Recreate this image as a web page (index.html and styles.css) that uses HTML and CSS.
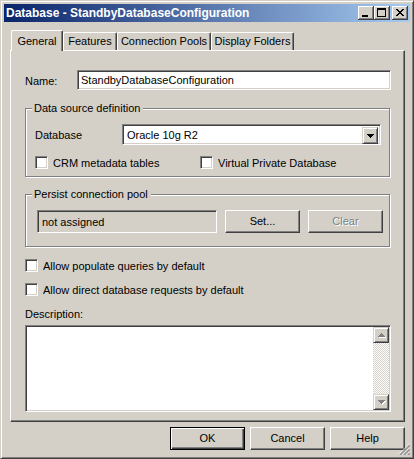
FILE: index.html
```
<!DOCTYPE html>
<html>
<head>
<meta charset="utf-8">
<title>Database - StandbyDatabaseConfiguration</title>
<link rel="stylesheet" href="styles.css">
</head>
<body>
<div class="window">
  <div class="titlebar">
    <span class="title">Database - StandbyDatabaseConfiguration</span>
    <div class="caption-btns">
      <div class="cap-btn"><svg width="16" height="14" viewBox="0 0 16 14" shape-rendering="crispEdges"><rect x="4" y="9" width="6" height="2" fill="#000"/></svg></div>
      <div class="cap-btn"><svg width="16" height="14" viewBox="0 0 16 14" shape-rendering="crispEdges"><rect x="3" y="2" width="9" height="2" fill="#000"/><rect x="3" y="2" width="1" height="9" fill="#000"/><rect x="11" y="2" width="1" height="9" fill="#000"/><rect x="3" y="10" width="9" height="1" fill="#000"/></svg></div>
      <div class="cap-btn cap-close"><svg width="16" height="14" viewBox="0 0 16 14" shape-rendering="crispEdges" fill="#000"><rect x="4" y="3" width="2" height="1"/><rect x="10" y="3" width="2" height="1"/><rect x="5" y="4" width="2" height="1"/><rect x="9" y="4" width="2" height="1"/><rect x="6" y="5" width="4" height="1"/><rect x="7" y="6" width="2" height="1"/><rect x="6" y="7" width="4" height="1"/><rect x="5" y="8" width="2" height="1"/><rect x="9" y="8" width="2" height="1"/><rect x="4" y="9" width="2" height="1"/><rect x="10" y="9" width="2" height="1"/></svg></div>
    </div>
  </div>

  <div class="client">
    <div class="tabs">
      <div class="tab tab-general active">General</div>
      <div class="tab tab-features">Features</div>
      <div class="tab tab-pools">Connection Pools</div>
      <div class="tab tab-folders">Display Folders</div>
    </div>

    <div class="panel">
      <div class="name-row">
        <span class="name-label">Name:</span>
        <div class="field name-field">StandbyDatabaseConfiguration</div>
      </div>

      <fieldset class="group group-ds">
        <legend>Data source definition</legend>
        <div class="db-row">
          <span class="db-label">Database</span>
          <div class="combo">
            <span class="combo-text">Oracle 10g R2</span>
            <span class="combo-btn"><svg width="7" height="4" viewBox="0 0 7 4" shape-rendering="crispEdges" fill="#000"><rect x="0" y="0" width="7" height="1"/><rect x="1" y="1" width="5" height="1"/><rect x="2" y="2" width="3" height="1"/><rect x="3" y="3" width="1" height="1"/></svg></span>
          </div>
        </div>
        <div class="check-row">
          <div class="check"><span class="box"></span><span>CRM metadata tables</span></div>
          <div class="check"><span class="box"></span><span>Virtual Private Database</span></div>
        </div>
      </fieldset>

      <fieldset class="group group-pool">
        <legend>Persist connection pool</legend>
        <div class="pool-row">
          <div class="field readonly">not assigned</div>
          <div class="btn btn-set">Set...</div>
          <div class="btn btn-clear disabled">Clear</div>
        </div>
      </fieldset>

      <div class="check standalone first"><span class="box"></span><span>Allow populate queries by default</span></div>
      <div class="check standalone second"><span class="box"></span><span>Allow direct database requests by default</span></div>

      <div class="desc-label">Description:</div>
      <div class="textarea">
        <div class="text-body"></div>
        <div class="scrollbar">
          <div class="sb-btn"><svg width="9" height="6" viewBox="0 0 9 6" shape-rendering="crispEdges"><g fill="#fff"><rect x="4" y="1" width="1" height="1"/><rect x="3" y="2" width="3" height="1"/><rect x="2" y="3" width="5" height="1"/><rect x="1" y="4" width="7" height="1"/></g><g fill="#808080"><rect x="3" y="0" width="1" height="1"/><rect x="2" y="1" width="3" height="1"/><rect x="1" y="2" width="5" height="1"/><rect x="0" y="3" width="7" height="1"/></g></svg></div>
          <div class="sb-track"></div>
          <div class="sb-btn"><svg width="9" height="6" viewBox="0 0 9 6" shape-rendering="crispEdges"><g fill="#fff"><rect x="1" y="1" width="7" height="1"/><rect x="2" y="2" width="5" height="1"/><rect x="3" y="3" width="3" height="1"/><rect x="4" y="4" width="1" height="1"/></g><g fill="#808080"><rect x="0" y="0" width="7" height="1"/><rect x="1" y="1" width="5" height="1"/><rect x="2" y="2" width="3" height="1"/><rect x="3" y="3" width="1" height="1"/></g></svg></div>
        </div>
      </div>
    </div>

    <div class="buttons">
      <div class="btn default">OK</div>
      <div class="btn">Cancel</div>
      <div class="btn">Help</div>
    </div>
  </div>

  <svg class="grip" width="12" height="12" viewBox="0 0 12 12">
    <g stroke-width="1">
      <line x1="12" y1="0.5" x2="0.5" y2="12" stroke="#fff"/>
      <line x1="12" y1="1.5" x2="1.5" y2="12" stroke="#808080"/>
      <line x1="12" y1="2.5" x2="2.5" y2="12" stroke="#808080"/>
      <line x1="12" y1="4.5" x2="4.5" y2="12" stroke="#fff"/>
      <line x1="12" y1="5.5" x2="5.5" y2="12" stroke="#808080"/>
      <line x1="12" y1="6.5" x2="6.5" y2="12" stroke="#808080"/>
      <line x1="12" y1="8.5" x2="8.5" y2="12" stroke="#fff"/>
      <line x1="12" y1="9.5" x2="9.5" y2="12" stroke="#808080"/>
      <line x1="12" y1="10.5" x2="10.5" y2="12" stroke="#808080"/>
    </g>
  </svg>
</div>
</body>
</html>
```

FILE: styles.css
```
* {
  box-sizing: border-box;
}

html, body {
  margin: 0;
  padding: 0;
  background: #D4D0C8;
}

body {
  font: 11px/13px "Liberation Sans", Arial, sans-serif;
  color: #000;
}

.window {
  position: relative;
  width: 414px;
  height: 459px;
  background: #D4D0C8;
  border: 1px solid;
  border-color: #D4D0C8 #404040 #404040 #D4D0C8;
  box-shadow: inset 1px 1px 0 #fff, inset -1px -1px 0 #808080;
  padding: 3px;
  display: flex;
  flex-direction: column;
}

/* Title bar */
.titlebar {
  height: 18px;
  flex: none;
  display: flex;
  align-items: center;
  justify-content: space-between;
  padding: 0 2px;
  background: linear-gradient(to right, #0A246A, #A6CAF0);
}

.title {
  color: #fff;
  font-weight: bold;
  font-size: 12px;
  line-height: 14px;
  white-space: nowrap;
}

.caption-btns {
  display: flex;
}

.cap-btn {
  width: 16px;
  height: 14px;
  background: #D4D0C8;
  box-shadow: inset -1px -1px 0 #404040, inset 1px 1px 0 #fff, inset -2px -2px 0 #808080;
}

.cap-btn svg {
  display: block;
}

.cap-close {
  margin-left: 2px;
}

/* Client area */
.client {
  flex: 1;
  display: flex;
  flex-direction: column;
  padding: 8px 5px 0 6px;
}

.tabs {
  height: 20px;
  display: flex;
  align-items: flex-end;
  padding-left: 1px;
}

.tab {
  height: 18px;
  padding-top: 2px;
  text-align: center;
  white-space: nowrap;
  background: #D4D0C8;
  border-top: 1px solid #fff;
  border-left: 1px solid #fff;
  border-right: 1px solid #404040;
  border-top-left-radius: 2px;
  border-top-right-radius: 2px;
  box-shadow: inset -1px 0 0 #808080;
}

.tab.active {
  position: relative;
  z-index: 1;
  height: 21px;
  margin-bottom: -1px;
  padding-top: 4px;
}

.tab-general { width: 52px; }
.tab-features { width: 54px; }
.tab-pools { width: 94px; }
.tab-folders { width: 83px; }

.panel {
  width: 395px;
  height: 372px;
  flex: none;
  display: flex;
  flex-direction: column;
  border: 1px solid;
  border-color: #fff #404040 #404040 #fff;
  box-shadow: inset -1px -1px 0 #808080;
  padding: 19px 13px 0 14px;
}

/* Sunken field */
.field {
  height: 20px;
  background: #fff;
  border: 1px solid;
  border-color: #808080 #fff #fff #808080;
  box-shadow: inset 1px 1px 0 #404040, inset -1px -1px 0 #D4D0C8;
  padding: 3px 3px 0;
  white-space: nowrap;
  overflow: hidden;
}

.name-row {
  display: flex;
  align-items: center;
  height: 20px;
}

.name-label {
  width: 52px;
  flex: none;
  padding-top: 3px;
}

.name-field {
  flex: 1;
}

/* Group boxes */
.group {
  margin: 0 1px 0 0;
  min-width: 0;
  border: 1px solid #808080;
  box-shadow: 1px 1px 0 #fff, inset 1px 1px 0 #fff;
}

.group legend {
  padding: 0 3px 0 2px;
  margin-left: 0;
  line-height: 13px;
  background: #D4D0C8;
}

.group-ds {
  margin-top: 12px;
  padding: 9px 8px 7px 6px;
}

.group-pool {
  margin-top: 11px;
  padding: 9px 6px 13px 6px;
}

.db-row {
  display: flex;
  align-items: center;
  height: 21px;
  padding-left: 3px;
}

.db-label {
  width: 87px;
  flex: none;
  padding-top: 2px;
}

.combo {
  flex: 1;
  height: 21px;
  display: flex;
  background: #fff;
  border: 1px solid;
  border-color: #808080 #fff #fff #808080;
  box-shadow: inset 1px 1px 0 #404040, inset -1px -1px 0 #D4D0C8;
  padding: 2px;
}

.combo-text {
  flex: 1;
  padding: 2px 0 0 2px;
}

.combo-btn {
  width: 16px;
  height: 17px;
  display: flex;
  align-items: center;
  justify-content: center;
  background: #D4D0C8;
  border: 1px solid;
  border-color: #D4D0C8 #404040 #404040 #D4D0C8;
  box-shadow: inset 1px 1px 0 #fff, inset -1px -1px 0 #808080;
}

.combo-btn svg {
  display: block;
}

.check-row {
  margin-top: 11px;
  padding-left: 3px;
  display: grid;
  grid-template-columns: 165px auto;
}

.check {
  display: flex;
  align-items: center;
  height: 13px;
  white-space: nowrap;
}

.check > span:last-child {
  padding-top: 1px;
}

.box {
  width: 13px;
  height: 13px;
  flex: none;
  margin-right: 5px;
  background: #fff;
  border: 1px solid;
  border-color: #808080 #fff #fff #808080;
  box-shadow: inset 1px 1px 0 #404040, inset -1px -1px 0 #D4D0C8;
}

.pool-row {
  display: flex;
  padding-left: 5px;
}

.field.readonly {
  width: 180px;
  height: 23px;
  flex: none;
  background: #D4D0C8;
  padding: 5px 4px 0;
}

/* Buttons */
.btn {
  width: 75px;
  height: 23px;
  flex: none;
  display: flex;
  align-items: center;
  justify-content: center;
  background: #D4D0C8;
  border: 1px solid;
  border-color: #fff #404040 #404040 #fff;
  box-shadow: inset -1px -1px 0 #808080;
  white-space: nowrap;
}

.btn-set,
.btn-clear {
  margin-left: 8px;
}

.btn.disabled {
  color: #808080;
  text-shadow: 1px 1px 0 #fff;
}

.btn.default {
  border-color: #000;
  box-shadow: inset 1px 1px 0 #fff, inset -1px -1px 0 #404040, inset -2px -2px 0 #808080;
}

.standalone.first {
  margin-top: 12px;
}

.standalone.second {
  margin-top: 11px;
}

.desc-label {
  margin-top: 12px;
  height: 13px;
}

.textarea {
  margin-top: 4px;
  height: 87px;
  display: flex;
  background: #fff;
  border: 1px solid;
  border-color: #808080 #fff #fff #808080;
  box-shadow: inset 1px 1px 0 #404040, inset -1px -1px 0 #D4D0C8;
  padding: 1px;
}

.text-body {
  flex: 1;
}

.scrollbar {
  width: 16px;
  display: flex;
  flex-direction: column;
}

.sb-btn {
  width: 16px;
  height: 16px;
  flex: none;
  display: flex;
  align-items: center;
  justify-content: center;
  background: #D4D0C8;
  border: 1px solid;
  border-color: #D4D0C8 #404040 #404040 #D4D0C8;
  box-shadow: inset 1px 1px 0 #fff, inset -1px -1px 0 #808080;
}

.sb-btn svg {
  display: block;
  margin-left: 2px;
  margin-top: 1px;
}

.sb-track {
  flex: 1;
  background: repeating-conic-gradient(#fff 0 25%, #D4D0C8 0 50%) 0 0 / 2px 2px;
}

.buttons {
  display: flex;
  justify-content: flex-end;
  gap: 5px;
  margin-top: 5px;
}

.grip {
  position: absolute;
  right: 3px;
  bottom: 3px;
  display: block;
}
```
